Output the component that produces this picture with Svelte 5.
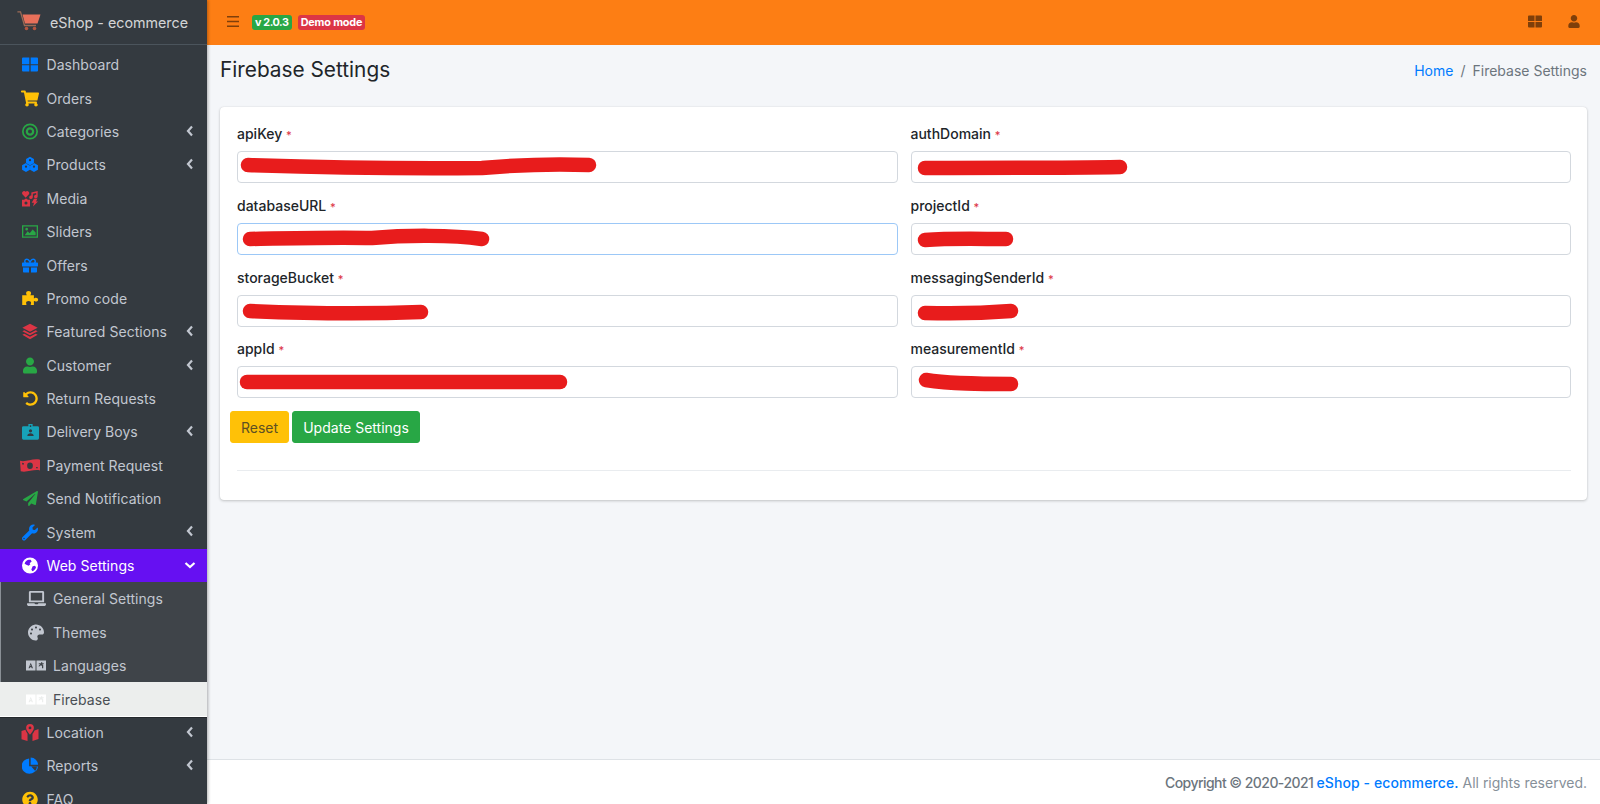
<script>
  const c = (x, y, r) => `M${x} ${y - r}a${r} ${r} 0 1 0 0 ${2 * r}a${r} ${r} 0 1 0 0 ${-2 * r}z`;
  const hex = (x, y, r) => {
    const h = r * 0.87;
    return `M${x} ${y - r}L${x + h} ${y - r / 2}V${y + r / 2}L${x} ${y + r}L${x - h} ${y + r / 2}V${y - r / 2}z`;
  };
  const icons = {
    dash: { vb: '0 0 24 24', d: 'M0 3a1.500 1.500 0 0 1 1.500-1.500H11V11.500H0zM13 1.500h9.500A1.500 1.500 0 0 1 24 3V11.500H13zM0 13H11V22.500H1.500A1.500 1.500 0 0 1 0 21zM13 13H24V21A1.500 1.500 0 0 1 22.500 22.500H13z' },
    cart: { vb: '0 0 576 512', d: 'M528.12 301.319l47.273-208C578.806 78.301 567.391 64 551.99 64H159.208l-9.166-44.81C147.758 8.021 137.93 0 126.529 0H24C10.745 0 0 10.745 0 24v16c0 13.255 10.745 24 24 24h69.883l70.248 343.435C147.325 417.1 136 435.222 136 456c0 30.928 25.072 56 56 56s56-25.072 56-56c0-15.674-6.447-29.835-16.824-40h209.647C430.447 426.165 424 440.326 424 456c0 30.928 25.072 56 56 56s56-25.072 56-56c0-22.172-12.888-41.332-31.579-50.405l5.517-24.276c3.413-15.018-8.002-29.319-23.403-29.319H218.117l-6.545-32h293.145c11.206 0 20.92-7.754 23.403-18.681z' },
    target: { vb: '0 0 24 24', d: c(12, 12, 12) + c(12, 12, 9.4) + c(12, 12, 6.4) + c(12, 12, 3) },
    cubes: { vb: '0 0 24 24', d: hex(12, 7, 6.8) + c(12, 5.6, 1.7) + hex(6, 16.6, 6.8) + c(6, 15.2, 1.7) + hex(18, 16.6, 6.8) + c(18, 15.2, 1.7) },
    media: { vb: '0 0 24 24', d: 'M5.500 11L.6 5.800C-1.200 2.800 2.500-1 5.500 1.900C8.500-1 12.200 2.800 10.400 5.800zM14 3L23.500 .6V8.800a2.700 2.700 0 1 1-2.200-2.500V3.700L16.200 5V10a2.700 2.700 0 1 1-2.200-2.500zM3.500 14L4.500 12.500H7.500L8.500 14H12V24H0V14zM6 16.500a2.300 2.300 0 1 0 0 4.600a2.300 2.300 0 1 0 0-4.600zM18 12.500H23L21 16.500H24L16.500 24L18 18.500H14.500z' },
    image: { vb: '0 0 24 24', d: 'M0 2.500H24V21.500H0zM2 4.500V19.500H22V4.500zM4 17.500L8.500 11.500L11.500 14.500L16 9L20.500 13.500V17.500z' + c(7, 8.500, 2) },
    gift: { vb: '0 0 512 512', d: 'M32 448c0 17.700 14.300 32 32 32h160V320H32zM288 480h160c17.700 0 32-14.300 32-32V320H288zM480 160h-42.100c6.200-12.100 10.100-25.500 10.100-40 0-48.500-39.500-88-88-88-41.600 0-68.500 21.300-103 68.300-34.500-47-61.400-68.300-103-68.300-48.500 0-88 39.500-88 88 0 14.500 3.800 27.900 10.100 40H32c-17.700 0-32 14.300-32 32v80c0 8.800 7.200 16 16 16h480c8.800 0 16-7.200 16-16v-80c0-17.700-14.300-32-32-32zM151.900 160c-22.100 0-40-17.900-40-40s17.900-40 40-40c19.900 0 34.600 3.300 86.100 80zM360 160h-86c51.400-76.500 65.700-80 86-80 22.100 0 40 17.900 40 40s-17.900 40-40 40z' },
    puzzle: { vb: '0 0 24 24', d: 'M1 7.500H7.500C7.500 6.500 6.500 6 6.500 4.500C6.500 2.800 8 1.500 10 1.500S13.500 2.800 13.500 4.500C13.500 6 12.500 6.500 12.500 7.500H17.500V12C18.500 12 19 11 20.500 11C22.200 11 23.500 12.200 23.500 13.700S22.200 16.400 20.500 16.400C19 16.400 18.500 15.500 17.500 15.500V21H13C13 19.500 13.500 19 13.500 18C13.500 16.500 12 15.500 10 15.500S6.500 16.500 6.500 18C6.500 19 7 19.500 7 21H1z' },
    layers: { vb: '0 0 24 24', d: 'M12 .5L23.500 6.500L12 12.500L.5 6.500zM3.500 10L12 14.500L20.500 10L23.500 11.800L12 17.800L.5 11.800zM3.500 15.300L12 19.800L20.500 15.300L23.500 17L12 23.500L.5 17z' },
    user: { vb: '0 0 448 512', d: 'M224 256c70.700 0 128-57.300 128-128S294.700 0 224 0 96 57.300 96 128s57.300 128 128 128zm89.600 32h-16.700c-22.200 10.200-46.900 16-72.900 16s-50.600-5.800-72.900-16h-16.700C60.200 288 0 348.200 0 422.400V464c0 26.500 21.500 48 48 48h352c26.500 0 48-21.500 48-48v-41.600c0-74.200-60.200-134.400-134.400-134.400z' },
    undo: { vb: '0 0 512 512', d: 'M255.545 8c-66.269.119-126.438 26.233-170.860 68.685L48.971 40.971C33.851 25.851 8 36.559 8 57.941V192c0 13.255 10.745 24 24 24h134.059c21.382 0 32.090-25.851 16.971-40.971l-41.750-41.750c30.864-28.899 70.801-44.907 113.230-45.273 92.398-.798 170.283 73.977 169.484 169.442C423.236 348.009 349.816 424 256 424c-41.127 0-79.997-14.678-110.630-41.556-4.743-4.161-11.906-3.908-16.368.553L89.340 422.659c-4.872 4.872-4.631 12.815.482 17.433C133.798 479.813 192.074 504 256 504c136.966 0 247.999-111.033 248-247.998C504.001 119.193 392.354 7.755 255.545 8z' },
    idcard: { vb: '0 0 24 24', d: 'M2 4.500H9V1.500H15V4.500H22A2 2 0 0 1 24 6.500V21.500A2 2 0 0 1 22 23.500H2A2 2 0 0 1 0 21.500V6.500A2 2 0 0 1 2 4.500zM11 3V5.500H13V3z' + c(12, 11, 2.3) + 'M7.500 18.500C7.500 15.800 9.500 14.500 12 14.500S16.500 15.800 16.500 18.500z' },
    money: { vb: '0 0 28 20', d: 'M0 3.500C8 6 18-.5 28 2V17C20 14.500 9 20.500 1 18zM14 5.800a4 4.500 0 1 0 0 9a4 4.500 0 1 0 0-9zM3 6V8.500H5.500V7zM22.500 12V14H25V12.300z' },
    plane: { vb: '0 0 512 512', d: 'M476 3.200L12.500 270.600c-18.100 10.400-15.800 35.600 2.200 43.200L121 358.400l287.300-253.200c5.500-4.900 13.300 2.600 8.600 8.300L176 407v80.500c0 23.600 28.500 32.900 42.500 15.800L282 426l124.600 52.200c14.200 6 30.400-2.900 33-18.200l72-432C515 7.800 493.300-6.800 476 3.200z' },
    wrench: { vb: '0 0 512 512', d: 'M507.730 109.100c-2.240-9.030-13.540-12.090-20.120-5.510l-74.360 74.360-67.880-11.310-11.310-67.880 74.360-74.360c6.620-6.620 3.430-17.900-5.660-20.160-47.380-11.740-99.550.91-136.580 37.930-39.640 39.640-50.550 97.100-34.050 147.200L18.740 402.760c-24.990 24.990-24.990 65.510 0 90.500 24.990 24.990 65.510 24.990 90.500 0l213.210-213.210c50.120 16.710 107.470 5.680 147.370-34.220 37.070-37.070 49.700-89.320 37.910-136.730zM64 472c-13.250 0-24-10.750-24-24 0-13.260 10.750-24 24-24s24 10.740 24 24c0 13.250-10.750 24-24 24z' },
    globe: { vb: '0 0 24 24', d: c(12, 12, 12) + 'M6 5.500C8 3.500 11 3 13 3.500L14.500 6L11.500 8.500L12.500 10L10 12.500L6.500 11L4 9.500C4 8 5 6.500 6 5.500zM16 13L19.500 12.500L21 14.500C20 17.500 18 19.500 15.500 20.500L14 18z' },
    laptop: { vb: '0 0 640 512', d: 'M624 416H381.540c-.74 19.810-14.710 32-32.740 32H288c-18.690 0-33.020-17.470-32.770-32H16c-8.800 0-16 7.200-16 16v16c0 35.200 28.800 64 64 64h512c35.200 0 64-28.800 64-64v-16c0-8.800-7.200-16-16-16zM576 48c0-26.400-21.600-48-48-48H112C85.600 0 64 21.600 64 48v336h512V48zm-64 272H128V64h384v256z' },
    palette: { vb: '0 0 512 512', d: 'M204.300 5C104.900 24.400 24.800 104.300 5.200 203.400c-37 187 131.700 326.400 258.800 306.700 41.200-6.400 61.400-54.600 42.500-91.700-23.100-45.400 9.900-98.400 60.900-98.400h79.700c35.800 0 64.800-29.600 64.900-65.300C511.500 97.100 368.100-26.900 204.300 5zM96 320c-17.700 0-32-14.300-32-32s14.300-32 32-32 32 14.300 32 32-14.300 32-32 32zm32-128c-17.700 0-32-14.300-32-32s14.300-32 32-32 32 14.300 32 32-14.300 32-32 32zm128-64c-17.700 0-32-14.300-32-32s14.300-32 32-32 32 14.300 32 32-14.300 32-32 32zm128 64c-17.700 0-32-14.300-32-32s14.300-32 32-32 32 14.300 32 32-14.300 32-32 32z' },
    lang: { vb: '0 0 40 20', d: 'M0 0H19V20H0zM9.500 4.500L5 15.500H7.500L8.300 13.300H10.700L11.500 15.500H14zM9.500 8.500L10.200 11H8.800zM21 0H40V20H21zM30 3.500V5.500H25.500V7.500H28.500L25.500 10.500V12.500L30 9.500L32 11V15.500H34.500V9.500L32.500 7.500H35.500V5.500H32.500V3.500z' },
    map: { vb: '0 0 24 24', d: 'M12 0a5.500 5.500 0 0 1 5.500 5.500C17.500 8.500 14 12.500 12 15C10 12.500 6.500 8.500 6.500 5.500A5.500 5.500 0 0 1 12 0zM12 3.500a2 2 0 1 0 0 4a2 2 0 1 0 0-4zM0 10L5.500 8C6.500 11 8.500 13 8.500 14V24L0 21.500zM15.500 14C16.500 12.500 17.500 11 18.500 9L24 7V21L15.500 24z' },
    pie: { vb: '0 0 24 24', d: 'M10.700 1.500V13.300H22.500A11.500 11.500 0 1 1 10.700 1.500zM13 0A11 11 0 0 1 24 11H13zM14 13.500H24A11 11 0 0 1 20.500 21z' },
    faq: { vb: '0 0 512 512', d: 'M504 256c0 136.997-111.043 248-248 248S8 392.997 8 256C8 119.083 119.043 8 256 8s248 111.083 248 248zM262.655 90c-54.497 0-89.255 22.957-116.549 63.758-3.536 5.286-2.353 12.415 2.715 16.258l34.699 26.310c5.205 3.947 12.621 3.008 16.665-2.122 17.864-22.658 30.113-35.797 57.303-35.797 20.429 0 45.698 13.148 45.698 32.958 0 14.976-12.363 22.667-32.534 33.976C247.128 238.528 216 254.941 216 296v4c0 6.627 5.373 12 12 12h56c6.627 0 12-5.373 12-12v-1.333c0-28.462 83.186-29.647 83.186-106.667 0-58.002-60.165-102-116.531-102zM256 338c-25.365 0-46 20.635-46 46 0 25.364 20.635 46 46 46s46-20.636 46-46c0-25.365-20.635-46-46-46z' }
  };

  const menu = [
    { label: 'Dashboard', icon: 'dash', tone: 'blue', w: 16 },
    { label: 'Orders', icon: 'cart', tone: 'yellow', w: 18 },
    { label: 'Categories', icon: 'target', tone: 'green', w: 16, arrow: 'left' },
    { label: 'Products', icon: 'cubes', tone: 'blue', w: 16, arrow: 'left' },
    { label: 'Media', icon: 'media', tone: 'red', w: 16 },
    { label: 'Sliders', icon: 'image', tone: 'green', w: 16 },
    { label: 'Offers', icon: 'gift', tone: 'blue', w: 16 },
    { label: 'Promo code', icon: 'puzzle', tone: 'yellow', w: 18 },
    { label: 'Featured Sections', icon: 'layers', tone: 'red', w: 16, arrow: 'left' },
    { label: 'Customer', icon: 'user', tone: 'green', w: 14, arrow: 'left' },
    { label: 'Return Requests', icon: 'undo', tone: 'yellow', w: 15 },
    { label: 'Delivery Boys', icon: 'idcard', tone: 'teal', w: 17, arrow: 'left' },
    { label: 'Payment Request', icon: 'money', tone: 'red', w: 20 },
    { label: 'Send Notification', icon: 'plane', tone: 'green', w: 15 },
    { label: 'System', icon: 'wrench', tone: 'blue', w: 16, arrow: 'left' },
    { label: 'Web Settings', icon: 'globe', tone: 'white', w: 16, arrow: 'down', active: true },
    { label: 'General Settings', icon: 'laptop', tone: 'grey', w: 19, sub: true },
    { label: 'Themes', icon: 'palette', tone: 'grey', w: 16, sub: true },
    { label: 'Languages', icon: 'lang', tone: 'grey', w: 20, sub: true },
    { label: 'Firebase', icon: 'lang', tone: 'white', w: 20, sub: true, current: true },
    { label: 'Location', icon: 'map', tone: 'red', w: 18, arrow: 'left' },
    { label: 'Reports', icon: 'pie', tone: 'blue', w: 16, arrow: 'left' },
    { label: 'FAQ', icon: 'faq', tone: 'yellow', w: 16 }
  ];

  const fields = [
    { name: 'apiKey', scribble: 'M11 14C70 16 150 18 245 17C290 13 325 13 352 14' },
    { name: 'authDomain', scribble: 'M14 17C80 17 150 17 209 16' },
    { name: 'databaseURL', focus: true, scribble: 'M13 16C60 15 100 14 135 15C170 12 215 12 245 16' },
    { name: 'projectId', scribble: 'M14 17C40 15 70 16 95 16' },
    { name: 'storageBucket', scribble: 'M13 16C60 18 130 19 184 17' },
    { name: 'messagingSenderId', scribble: 'M14 18C50 19 75 18 100 16' },
    { name: 'appId', scribble: 'M10 16H323' },
    { name: 'measurementId', scribble: 'M15 14C40 18 70 18 100 18' }
  ];
</script>

<div class="app">
  <aside class="sidebar">
    <div class="brand">
      <svg class="logo" viewBox="0 0 24 20" aria-hidden="true">
        <path class="logo-handle" d="M.4 .8H3.500L7.500 14.500H19" />
        <path class="logo-basket" d="M5.500 3.500H23.500L20.500 12.500H8z" />
        <circle class="logo-wheel" cx="9.500" cy="17.500" r="1.800" />
        <circle class="logo-wheel" cx="17.500" cy="17.500" r="1.800" />
      </svg>
      <span>eShop - ecommerce</span>
    </div>
    <nav class="menu">
      {#each menu as item}
        <div class="item" class:sub={item.sub} class:active={item.active} class:current={item.current}>
          <span class="icon-box">
            <svg class={'icon ' + item.tone} viewBox={icons[item.icon].vb} style:width={item.w + 'px'} aria-hidden="true">
              <path fill-rule="evenodd" d={icons[item.icon].d} />
            </svg>
          </span>
          <span class="label">{item.label}</span>
          {#if item.arrow === 'left'}
            <svg class="arrow" viewBox="0 0 8 12" aria-hidden="true"><path d="M6 1.500L2 6L6 10.500" /></svg>
          {:else if item.arrow === 'down'}
            <svg class="arrow" viewBox="0 0 12 8" aria-hidden="true"><path d="M1.500 2L6 6L10.500 2" /></svg>
          {/if}
        </div>
      {/each}
    </nav>
  </aside>

  <div class="main">
    <header class="topbar">
      <svg class="bars" viewBox="0 0 12 11" aria-hidden="true">
        <path d="M0 0H12V1.400H0zM0 4.800H12V6.200H0zM0 9.600H12V11H0z" />
      </svg>
      <span class="badge success">v 2.0.3</span>
      <span class="badge danger">Demo mode</span>
      <span class="spacer"></span>
      <svg class="top-icon grid" viewBox="0 0 14 12" aria-hidden="true">
        <path d="M0 1a1 1 0 0 1 1-1H6.500V5.500H0zM7.500 0H13a1 1 0 0 1 1 1V5.500H7.500zM0 6.500H6.500V12H1a1 1 0 0 1-1-1zM7.500 6.500H14V11a1 1 0 0 1-1 1H7.500z" />
      </svg>
      <svg class="top-icon person" viewBox={icons.user.vb} aria-hidden="true"><path d={icons.user.d} /></svg>
    </header>

    <main class="content">
      <div class="page-head">
        <h1>Firebase Settings</h1>
        <ol class="crumbs">
          <li class="home">Home</li>
          <li class="slash">/</li>
          <li>Firebase Settings</li>
        </ol>
      </div>

      <section class="card">
        <form class="grid-form">
          {#each fields as field}
            <div class="field">
              <span class="field-label">{field.name} <em>*</em></span>
              <div class="input" class:focus={field.focus}>
                <svg class="scribble" aria-hidden="true"><path d={field.scribble} /></svg>
              </div>
            </div>
          {/each}
        </form>
        <div class="actions">
          <button type="button" class="btn reset">Reset</button>
          <button type="button" class="btn update">Update Settings</button>
        </div>
        <div class="divider"></div>
      </section>
    </main>

    <footer class="footer">
      <strong>Copyright © 2020-2021 <b>eShop - ecommerce.</b></strong>&nbsp;All rights reserved.
    </footer>
  </div>
</div>

<style>
  :global(body) {
    margin: 0;
    overflow: hidden;
    font-family: Inter, "Noto Sans", "Liberation Sans", sans-serif;
  }
  .app {
    display: grid;
    grid-template-columns: 207px 1fr;
    height: 804px;
    overflow: hidden;
  }
  .sidebar {
    background: #343a40;
    overflow: hidden;
    height: 804px;
    box-shadow: 1px 0 3px rgba(0, 0, 0, 0.3);
    z-index: 2;
  }
  .brand {
    height: 45px;
    box-sizing: border-box;
    border-bottom: 1px solid #4b545c;
    display: flex;
    align-items: center;
    padding-left: 17px;
    color: rgba(255, 255, 255, 0.8);
    font-size: 14.300px;
    gap: 9px;
    white-space: nowrap;
  }
  .logo {
    width: 24px;
    height: 20px;
    margin-bottom: 3px;
  }
  .logo-handle {
    fill: none;
    stroke: #9b6a55;
    stroke-width: 1.300;
  }
  .logo-basket {
    fill: #e8705a;
  }
  .logo-wheel {
    fill: #b4553f;
  }
  .menu {
    padding-top: 3px;
  }
  .item {
    height: 33.400px;
    display: flex;
    align-items: center;
    color: #c2c7d0;
    font-size: 14px;
    letter-spacing: 0.05px;
    white-space: nowrap;
    position: relative;
  }
  .icon-box {
    width: 46.500px;
    display: flex;
    justify-content: center;
    padding-left: 14px;
    box-sizing: border-box;
    flex: none;
  }
  .icon {
    height: 17px;
    display: block;
  }
  .icon path {
    fill: currentColor;
  }
  .blue { color: #007bff; }
  .yellow { color: #ffc107; }
  .green { color: #28a745; }
  .red { color: #dc3545; }
  .teal { color: #17a2b8; }
  .white { color: #fff; }
  .grey { color: #c2c7d0; }
  .arrow {
    position: absolute;
    right: 13px;
    top: 10px;
    width: 8px;
    height: 12px;
    fill: none;
    stroke: #c2c7d0;
    stroke-width: 2.200;
  }
  .active {
    background: #6610f2;
    color: #fff;
  }
  .active .arrow {
    width: 12px;
    right: 11px;
    stroke: #fff;
  }
  .sub {
    background: #3f4449;
    box-shadow: inset 1px 0 0 #8a9096;
  }
  .sub .icon-box {
    width: 53px;
    padding-left: 19px;
  }
  .current {
    background: #eceeed;
    color: #4a4f54;
    box-shadow: 0 1px 0 #fff, 0 2px 0 #24282c;
  }
  .main {
    display: flex;
    flex-direction: column;
    min-width: 0;
    height: 804px;
  }
  .topbar {
    height: 45px;
    flex: none;
    background: #fd7e14;
    display: flex;
    align-items: center;
    padding: 0 20px;
    box-sizing: border-box;
  }
  .bars {
    width: 12px;
    height: 11px;
    margin-right: 13px;
    margin-bottom: 2px;
  }
  .bars path, .top-icon path {
    fill: #7f3f0a;
  }
  .badge {
    height: 15px;
    border-radius: 3px;
    color: #fff;
    font-size: 10.800px;
    font-weight: 700;
    letter-spacing: -0.15px;
    line-height: 15px;
    padding: 0 3px;
    margin-right: 6px;
    margin-bottom: 1px;
    white-space: nowrap;
  }
  .success {
    background: #28a745;
    letter-spacing: -0.4px;
  }
  .danger { background: #dc3545; }
  .spacer { flex: 1; }
  .top-icon {
    height: 13px;
    margin-bottom: 2px;
  }
  .grid {
    width: 14px;
    margin-right: 26px;
  }
  .person {
    width: 12px;
  }
  .content {
    flex: 1;
    background: #f4f6f9;
    padding: 0 13px;
    min-height: 0;
  }
  .page-head {
    height: 62px;
    display: flex;
    align-items: center;
    justify-content: space-between;
    padding-bottom: 12px;
    box-sizing: border-box;
  }
  h1 {
    margin: 0;
    font-size: 20.800px;
    font-weight: 400;
    color: #212529;
    line-height: 1.200;
  }
  .crumbs {
    list-style: none;
    display: flex;
    margin: 0;
    padding: 0;
    font-size: 14px;
    color: #6c757d;
  }
  .home { color: #007bff; }
  .slash { margin: 0 7px; }
  .card {
    box-sizing: border-box;
    height: 393px;
    background: #fff;
    border-radius: 4px;
    box-shadow: 0 0 1px rgba(0, 0, 0, 0.125), 0 1px 3px rgba(0, 0, 0, 0.2);
    padding: 17px 16px 0 17px;
  }
  .grid-form {
    display: grid;
    grid-template-columns: 1fr 1fr;
    column-gap: 13px;
    row-gap: 12.800px;
  }
  .field {
    display: flex;
    flex-direction: column;
    height: 59px;
  }
  .field-label {
    height: 27px;
    line-height: 20px;
    font-size: 14px;
    font-weight: 500;
    color: #212529;
  }
  em {
    color: #dc3545;
    font-style: normal;
    font-size: 11px;
  }
  .input {
    height: 32px;
    box-sizing: border-box;
    border: 1px solid #d3d8de;
    border-radius: 4px;
    background: #fff;
    position: relative;
  }
  .focus {
    border-color: #9cc8f7;
  }
  .scribble {
    position: absolute;
    left: -1px;
    top: -1px;
    width: 400px;
    height: 32px;
    overflow: visible;
  }
  .scribble path {
    fill: none;
    stroke: #e81c1c;
    stroke-width: 14.500;
    stroke-linecap: round;
    stroke-linejoin: round;
  }
  .actions {
    display: flex;
    gap: 3px;
    margin: 13px 0 0 -7px;
  }
  .btn {
    height: 32px;
    border-radius: 3px;
    font: 400 14px Inter, "Noto Sans", sans-serif;
    padding: 0;
  }
  .reset {
    width: 59px;
    background: #ffc107;
    border: 1px solid #ffc107;
    color: #5d5024;
  }
  .update {
    width: 128px;
    background: #28a745;
    border: 1px solid #28a745;
    color: #fff;
  }
  .divider {
    height: 1px;
    background: #e9ecef;
    margin-top: 27px;
  }
  .footer {
    height: 45px;
    flex: none;
    box-sizing: border-box;
    background: #fff;
    border-top: 1px solid #dee2e6;
    display: flex;
    align-items: center;
    justify-content: flex-end;
    padding-right: 13px;
    font-size: 14px;
    color: #869099;
    white-space: pre;
  }
  .footer strong {
    font-weight: 500;
    letter-spacing: -0.55px;
    color: #6c757d;
  }
  .footer b {
    font-weight: 500;
    letter-spacing: 0.1px;
    color: #007bff;
  }
</style>
